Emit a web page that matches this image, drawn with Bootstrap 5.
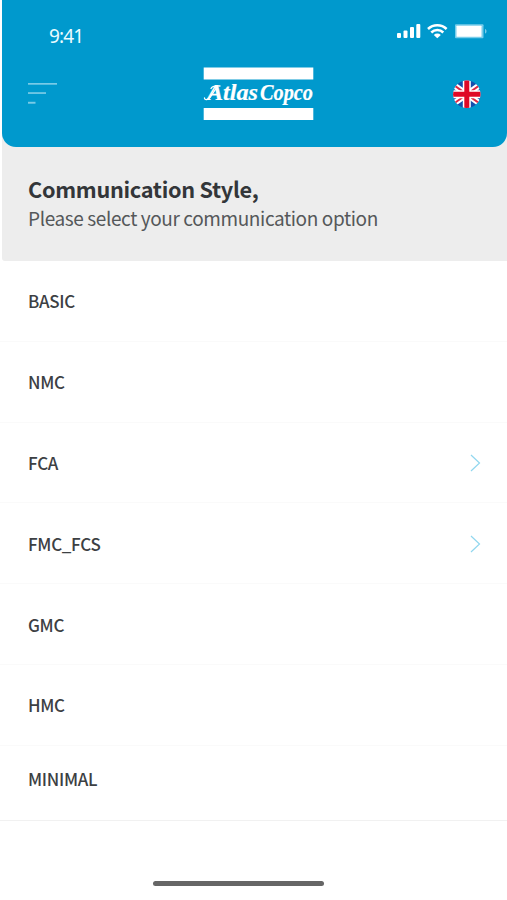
<!DOCTYPE html>
<html lang="en">
<head>
<meta charset="utf-8">
<meta name="viewport" content="width=device-width, initial-scale=1">
<title>Communication Style</title>
<link href="https://cdn.jsdelivr.net/npm/bootstrap@5.3.0/dist/css/bootstrap.min.css" rel="stylesheet">
<style>
body{font-family:"Noto Sans CJK SC","Noto Sans",sans-serif;color:#3c4043;background:#fff}
.screen{height:900px}
.top-wrap{background:#ededed;height:147px;margin-left:2px}
.app-header{background:#0099cd;height:147px;border-radius:0 0 14px 14px;padding-left:26px;padding-right:26px}
.status-row{height:61px;padding:22px 0 0 21px}
.clock{font:400 19px/28px "Noto Sans",sans-serif;letter-spacing:-.9px;color:#e9fbff}
.signals{margin-right:-6px;margin-top:-2px}
.tools{padding-top:6px}
.tool-left{width:69px}
.tool-right{width:60px}
.intro{background:#ededed;height:114px;margin-left:2px;padding:27px 26px 0;border-radius:0 0 0 3px}
.intro h1{font-size:21.700px;line-height:30px;font-weight:700;color:#333639;letter-spacing:-.3px}
.intro p{font-size:19px;line-height:28px;color:#55585a;letter-spacing:-.39px}
.choices .list-group-item{height:80.800px;padding:1px 26px 0 28px;border-color:#fafafa;border-width:0 0 1px;color:#3c4043;font-size:17px;font-weight:500;line-height:24px;letter-spacing:-.3px}
.choices .list-group-item svg{margin-top:1px}
.choices .list-group-item:last-child{height:75px;padding-bottom:8px;border-width:0 0 1px;border-color:#f1f1f1}
.home-bar{width:171px;height:5px;background:#666;margin:0 0 14px 153px}
</style>
<script src="https://cdn.jsdelivr.net/npm/bootstrap@5.3.0/dist/js/bootstrap.bundle.min.js" defer></script>
</head>
<body>
<main class="screen d-flex flex-column overflow-hidden">
  <div class="top-wrap">
    <header class="app-header">
      <div class="status-row d-flex justify-content-between">
        <span class="clock">9:41</span>
        <svg class="signals" width="92" height="20" viewBox="395 20 92 20" fill="#fff" aria-label="Signal, Wi-Fi, battery">
          <rect x="397" y="33" width="4" height="5" rx="1"/><rect x="403.5" y="30.5" width="4" height="7.5" rx="1"/><rect x="410" y="27" width="4" height="11" rx="1"/><rect x="416.3" y="24" width="4" height="14" rx="1"/>
          <g fill="none" stroke="#fff" stroke-width="2.5"><path d="M428 29a13.2 13.2 0 0 1 18.600 0M431.300 32.500a8.500 8.500 0 0 1 12 0"/></g>
          <path d="M433.800 35a5 5 0 0 1 7 0l-3.500 3.300z"/>
          <rect x="455" y="24.300" width="28.500" height="14" rx="1" fill="#78cdea"/><rect x="456.500" y="25.800" width="25" height="11" rx=".5"/><path d="M485 29c2 .7 2 4 0 4.500z" fill="#78cdea"/>
        </svg>
      </div>
      <nav class="tools d-flex justify-content-between">
        <div class="tool-left">
          <svg class="d-block" width="32" height="54" viewBox="28 67 32 54" fill="#79cbe7" aria-label="Menu"><rect x="28" y="83" width="29" height="1.700"/><rect x="28" y="92.200" width="18" height="1.700"/><rect x="28" y="101.800" width="7.500" height="1.900"/></svg>
        </div>
        <svg class="overflow-visible" width="120" height="54" viewBox="199 67 120 54" fill="#fff">
          <rect x="203.700" y="67.500" width="109.600" height="12"/><rect x="203.700" y="108" width="109.600" height="12"/>
          <g font-family="Liberation Serif,serif" font-style="italic" font-weight="700" font-size="22.500" stroke="#fff" stroke-width=".2">
          <text x="207" y="100" textLength="51" lengthAdjust="spacingAndGlyphs">Atlas</text>
          <text x="260" y="100" textLength="53" lengthAdjust="spacingAndGlyphs">Copco</text></g>
          <path d="M204.500 98c0 2.500 3.500 2 5.500-.5l7-10.500M211 88.500c1-2.500 4-2.800 9-2.500" fill="none" stroke="#fff" stroke-width="1.300" stroke-linecap="round"/>
        </svg>
        <div class="tool-right d-flex justify-content-end">
          <svg width="28" height="54" viewBox="452.700 67 28 54" aria-label="English">
            <defs><clipPath id="disc"><circle cx="466.500" cy="94.300" r="13.700"/></clipPath></defs>
            <g clip-path="url(#disc)"><path fill="#164eac" d="M452 80h29v29h-29z"/>
            <path d="M452 84l29 20.600M481 84l-29 20.600" stroke="#fff" stroke-width="6"/>
            <path d="M452 84l29 20.600M481 84l-29 20.600" stroke="#e12843" stroke-width="2"/>
            <path d="M466.500 80v29M452 94.300h29" stroke="#fff" stroke-width="8"/>
            <path d="M466.500 80v29M452 94.300h29" stroke="#df0826" stroke-width="5"/></g>
          </svg>
        </div>
      </nav>
    </header>
  </div>
  <section class="intro">
    <h1 class="mb-0">Communication Style,</h1>
    <p class="mb-0">Please select your communication option</p>
  </section>
  <div class="choices list-group list-group-flush">
    <a class="list-group-item d-flex align-items-center">BASIC</a>
    <a class="list-group-item d-flex align-items-center">NMC</a>
    <a class="list-group-item d-flex align-items-center justify-content-between">FCA
      <svg width="11" height="18" viewBox="0 0 11 18" fill="none" stroke="#91d7ef" stroke-width="1.200"><path d="M1 1l8.500 8L1 17"/></svg></a>
    <a class="list-group-item d-flex align-items-center justify-content-between">FMC_FCS
      <svg width="11" height="18" viewBox="0 0 11 18" fill="none" stroke="#91d7ef" stroke-width="1.200"><path d="M1 1l8.500 8L1 17"/></svg></a>
    <a class="list-group-item d-flex align-items-center">GMC</a>
    <a class="list-group-item d-flex align-items-center">HMC</a>
    <a class="list-group-item d-flex align-items-center">MINIMAL</a>
  </div>
  <div class="home-bar rounded-pill mt-auto"></div>
</main>
</body>
</html>
